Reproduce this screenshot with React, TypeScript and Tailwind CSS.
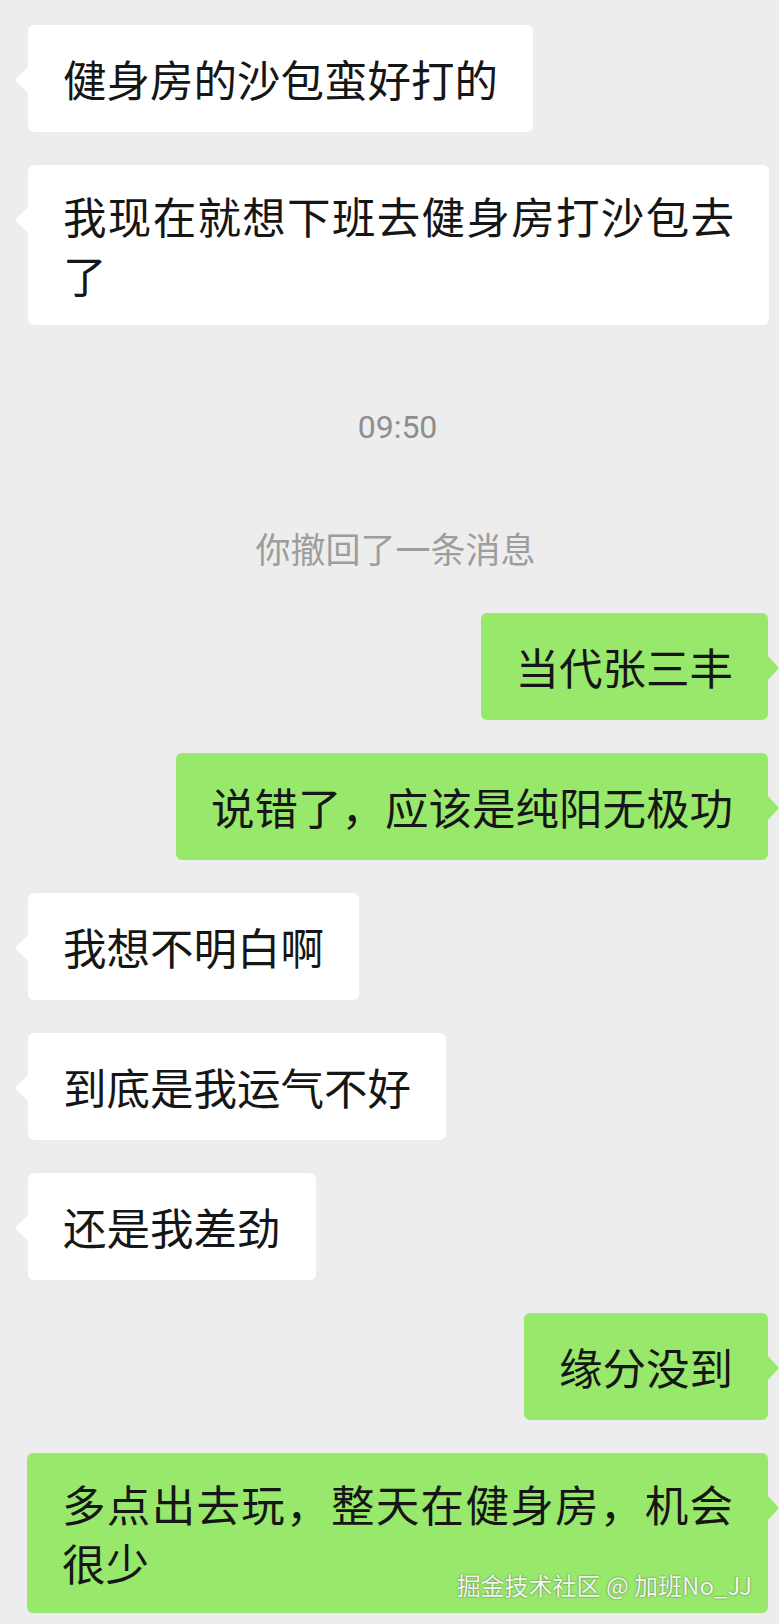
const messages = [
  { id: 1, side: "left", text: "健身房的沙包蛮好打的" },
  { id: 2, side: "left", text: "我现在就想下班去健身房打沙包去了" },
  { id: 3, side: "time", text: "09:50" },
  { id: 4, side: "system", text: "你撤回了一条消息" },
  { id: 5, side: "right", text: "当代张三丰" },
  { id: 6, side: "right", text: "说错了，应该是纯阳无极功" },
  { id: 7, side: "left", text: "我想不明白啊" },
  { id: 8, side: "left", text: "到底是我运气不好" },
  { id: 9, side: "left", text: "还是我差劲" },
  { id: 10, side: "right", text: "缘分没到" },
  { id: 11, side: "right", text: "多点出去玩，整天在健身房，机会很少", watermark: true },
];

function Bubble({
  side,
  text,
  watermark,
}: {
  side: string;
  text: string;
  watermark?: boolean;
}) {
  const mine = side === "right";
  return (
    <div className={mine ? "flex justify-end pr-[11px]" : "flex justify-start pl-[28px]"}>
      <div
        className={
          mine
            ? "relative max-w-[741px] min-h-[107px] flex items-center rounded-[6px] bg-[#98e86b] px-[35px] py-[21px]"
            : "relative max-w-[741px] min-h-[107px] flex items-center rounded-[6px] bg-white px-[35px] py-[21px]"
        }
      >
        {mine ? (
          <span className="absolute right-[-11px] top-[42px] h-0 w-0 border-y-[13px] border-y-transparent border-l-[12px] border-l-[#98e86b]" />
        ) : (
          <span className="absolute left-[-13px] top-[42px] h-0 w-0 border-y-[13px] border-y-transparent border-r-[13px] border-r-white" />
        )}
        <p className="text-justify text-[43.5px] leading-[59px] text-[#161616]">{text}</p>
        {watermark && (
          <span className="absolute right-[16px] bottom-[14px] whitespace-nowrap text-[24px] leading-[28px] text-[#f4f4f4] [text-shadow:0_0_2px_rgba(0,0,0,0.55)]">
            掘金技术社区 @ 加班No_JJ
          </span>
        )}
      </div>
    </div>
  );
}

export default function App() {
  return (
    <div className="min-h-screen w-full bg-[#ededed] pt-[25px] pb-[12px] font-['Noto_Sans_CJK_SC',sans-serif]">
      <div className="flex flex-col">
        {messages.map((m, i) => {
          if (m.side === "time") {
            return (
              <div
                key={m.id}
                className="mt-[82px] pl-[16px] text-center font-['Roboto','Noto_Sans_CJK_SC',sans-serif] text-[32px] leading-[40px] text-[#8e8e8e]"
              >
                {m.text}
              </div>
            );
          }
          if (m.side === "system") {
            return (
              <div
                key={m.id}
                className="mt-[81px] mb-[12px] pl-[12px] text-center text-[35px] leading-[40px] text-[#9d9d9d]"
              >
                {m.text}
              </div>
            );
          }
          return (
            <div key={m.id} className={i === 0 ? "" : "mt-[33px]"}>
              <Bubble side={m.side} text={m.text} watermark={m.watermark} />
            </div>
          );
        })}
      </div>
    </div>
  );
}
